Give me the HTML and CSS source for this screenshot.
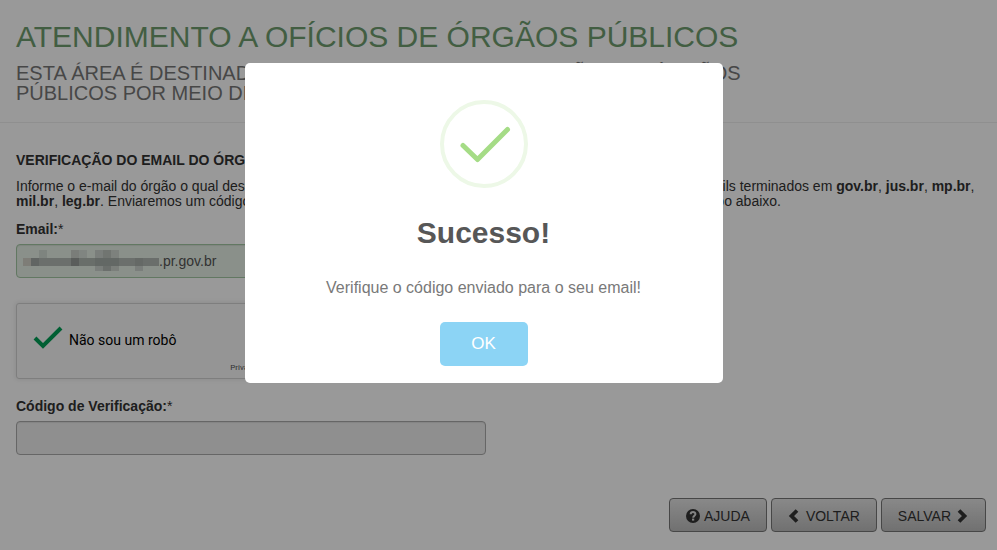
FILE: index.html
```html
<!DOCTYPE html>
<html lang="pt-BR">
<head>
  <meta charset="UTF-8" />
  <meta name="viewport" content="width=device-width, initial-scale=1.0" />
  <title>Atendimento a Ofícios de Órgãos Públicos</title>
  <link rel="stylesheet" href="styles.css">
</head>
<body>
  <header class="page-header">
    <h1>ATENDIMENTO A OFÍCIOS DE ÓRGÃOS PÚBLICOS</h1>
    <p class="subtitulo">ESTA ÁREA É DESTINADA PARA CONDUZIR AS SOLICITAÇÕES DE ÓRGÃOS PÚBLICOS POR MEIO DE OFÍCIO</p>
  </header>

  <form class="formulario">
    <h2>VERIFICAÇÃO DO EMAIL DO ÓRGÃO</h2>
    <p class="instrucoes">Informe o e-mail do órgão o qual deseja realizar a nova solicitação. Serão aceitos somente os endereços de e-mails terminados em <b>gov.br</b>, <b>jus.br</b>, <b>mp.br</b>, <b>mil.br</b>, <b>leg.br</b>. Enviaremos um código de verificação para o e-mail informado, digite este código recebido no campo abaixo.</p>

    <label for="email"><b>Email:</b>*</label>
    <div class="campo-email">
      <input class="campo valido" type="text" id="email" value=".pr.gov.br" />
      <svg class="mascara" viewBox="0 0 136 24" aria-hidden="true">
        <rect x="0" y="8" width="8" height="8" fill="#d2d0c6"/>
        <rect x="8" y="8" width="8" height="8" fill="#a2a9a6"/>
        <rect x="16" y="8" width="32" height="8" fill="#b3bab4"/>
        <rect x="16" y="0" width="8" height="8" fill="#d3dcd4"/>
        <rect x="48" y="0" width="8" height="8" fill="#cbd1ca"/>
        <rect x="56" y="0" width="8" height="8" fill="#d6ded7"/>
        <rect x="48" y="8" width="8" height="8" fill="#969c98"/>
        <rect x="56" y="8" width="16" height="8" fill="#b0b7b1"/>
        <rect x="72" y="0" width="8" height="8" fill="#ccd3cd"/>
        <rect x="80" y="0" width="8" height="8" fill="#bcc3bd"/>
        <rect x="88" y="0" width="8" height="8" fill="#d0d7d1"/>
        <rect x="72" y="8" width="24" height="8" fill="#a6ada8"/>
        <rect x="72" y="16" width="8" height="5" fill="#ccd3cd"/>
        <rect x="80" y="16" width="8" height="5" fill="#b3bab4"/>
        <rect x="88" y="16" width="8" height="5" fill="#cdd4ce"/>
        <rect x="96" y="8" width="16" height="8" fill="#b3bab4"/>
        <rect x="112" y="8" width="8" height="8" fill="#a8afaa"/>
        <rect x="120" y="8" width="16" height="8" fill="#b1b8b2"/>
        <rect x="112" y="16" width="8" height="5" fill="#ccd3cd"/>
      </svg>
    </div>

    <div class="captcha">
      <svg class="captcha-check" viewBox="0 0 30 28" aria-hidden="true">
        <path d="M2 12 L10 20 L28 2" fill="none" stroke="#009e55" stroke-width="4"/>
      </svg>
      <span>Não sou um robô</span>
      <small>Privacidade - Termos</small>
    </div>

    <label for="codigo"><b>Código de Verificação:</b>*</label>
    <input class="campo" type="text" id="codigo" />

    <div class="acoes">
      <button type="button" class="btn">
        <svg viewBox="0 0 14 14" aria-hidden="true">
          <circle cx="7" cy="7" r="7" fill="#333"/>
          <path d="M4.7 5.3 C4.7 2.3 9.6 2.4 9.4 5.2 C9.3 6.7 7.2 6.8 7.2 8.7" fill="none" stroke="#dadada" stroke-width="2"/>
          <rect x="6" y="9.6" width="2.2" height="2" fill="#dadada"/>
        </svg>
        AJUDA
      </button>
      <button type="button" class="btn">
        <svg viewBox="0 0 14 14" aria-hidden="true">
          <path d="M9 1.5 L3.5 7 L9 12.5" fill="none" stroke="#333" stroke-width="3.8"/>
        </svg>
        VOLTAR
      </button>
      <button type="button" class="btn">
        SALVAR
        <svg viewBox="0 0 14 14" aria-hidden="true">
          <path d="M4 1.5 L9.5 7 L4 12.5" fill="none" stroke="#333" stroke-width="3.8"/>
        </svg>
      </button>
    </div>
  </form>

  <div class="overlay"></div>
  <div class="alerta" role="dialog" aria-labelledby="alertaTitulo">
    <svg class="alerta-icone" viewBox="0 0 88 88" aria-hidden="true">
      <circle cx="44" cy="44" r="42" fill="none" stroke="#edf8e7" stroke-width="4"/>
      <path d="M23 45.5 L37.5 59.5 L67.5 29.5" fill="none" stroke="#a5dc86" stroke-width="5" stroke-linecap="round" stroke-linejoin="round"/>
    </svg>
    <h2 id="alertaTitulo">Sucesso!</h2>
    <p>Verifique o código enviado para o seu email!</p>
    <button type="button" class="confirmar">OK</button>
  </div>

  <script>
    document.querySelector('.confirmar').addEventListener('click', function () {
      document.querySelector('.overlay').style.display = 'none';
      document.querySelector('.alerta').style.display = 'none';
    });
  </script>
</body>
</html>
```
FILE: styles.css
```css
* {
  box-sizing: border-box;
}
body {
  margin: 0;
  font-family: "Liberation Sans", Arial, sans-serif;
  font-size: 14px;
  line-height: 15px;
  color: #333;
  background-color: #fff;
}
.page-header {
  padding: 20px 16px 19px;
  border-bottom: 1px solid #eee;
}
.page-header h1 {
  margin: 0 0 9px;
  font-size: 30px;
  font-weight: normal;
  line-height: 34px;
  color: #6f9d6f;
}
.subtitulo {
  max-width: 740px;
  margin: 0;
  font-size: 20px;
  line-height: 20px;
  color: #777;
}
.formulario {
  padding: 30px 11px 18px 16px;
}
.formulario h2 {
  margin: 0 0 11px;
  font-size: 14px;
  line-height: 15px;
}
.instrucoes {
  margin: 0 0 13px;
}
label {
  display: block;
  margin-bottom: 7px;
}
.campo {
  display: block;
  width: 470px;
  max-width: 100%;
  height: 34px;
  padding: 6px 12px;
  font-family: inherit;
  font-size: 14px;
  color: #555;
  background-color: #eee;
  border: 1px solid #aaa;
  border-radius: 4px;
  box-shadow: inset 0 1px 1px rgba(0, 0, 0, 0.075);
}
.campo-email {
  position: relative;
  margin-bottom: 25px;
}
.valido {
  padding-left: 142px;
  background-color: #e6f0e6;
  border-color: #a3c8a3;
}
.mascara {
  position: absolute;
  top: 6px;
  left: 7px;
  width: 136px;
  height: 24px;
}
.captcha {
  display: grid;
  grid-template-columns: 30px 1fr;
  grid-template-rows: 44px 12px;
  column-gap: 6px;
  align-items: center;
  width: 302px;
  height: 76px;
  margin-bottom: 20px;
  padding: 14px 12px 0 16px;
  font-family: Roboto, sans-serif;
  color: #000;
  background-color: #f9f9f9;
  border: 1px solid #d3d3d3;
  border-radius: 3px;
  box-shadow: 0 0 4px 1px rgba(0, 0, 0, 0.08);
}
.captcha-check {
  width: 30px;
  height: 28px;
}
.captcha small {
  grid-column: 1 / 3;
  justify-self: end;
  font-size: 8px;
  line-height: 10px;
  color: #555;
}
.acoes {
  display: flex;
  justify-content: flex-end;
  gap: 4px;
  margin-top: 43px;
}
.btn {
  display: flex;
  align-items: center;
  gap: 4px;
  height: 34px;
  padding: 2px 16px 0;
  font-family: inherit;
  font-size: 14px;
  color: #333;
  background-image: linear-gradient(#e4e4e4, #bcbcbc);
  border: 1px solid #777;
  border-radius: 4px;
  cursor: pointer;
}
.btn svg {
  width: 14px;
  height: 14px;
}
.overlay {
  position: fixed;
  top: 0;
  right: 0;
  bottom: 0;
  left: 0;
  background-color: rgba(0, 0, 0, 0.4);
}
.alerta {
  position: fixed;
  top: 63px;
  left: 50%;
  width: 478px;
  margin-left: -254px;
  padding: 37px 17px 17px;
  text-align: center;
  background-color: #fff;
  border-radius: 5px;
}
.alerta-icone {
  display: block;
  width: 88px;
  height: 88px;
  margin: 0 auto 25px;
}
.alerta h2 {
  margin: 0 0 24px;
  font-size: 30px;
  line-height: 40px;
  color: #575757;
}
.alerta p {
  margin: 0 0 24px;
  font-size: 16px;
  line-height: 21px;
  color: #797979;
}
.confirmar {
  width: 88px;
  height: 44px;
  padding: 0;
  font-family: inherit;
  font-size: 17px;
  color: #fff;
  background-color: #8cd4f5;
  border: none;
  border-radius: 5px;
  cursor: pointer;
}
```
